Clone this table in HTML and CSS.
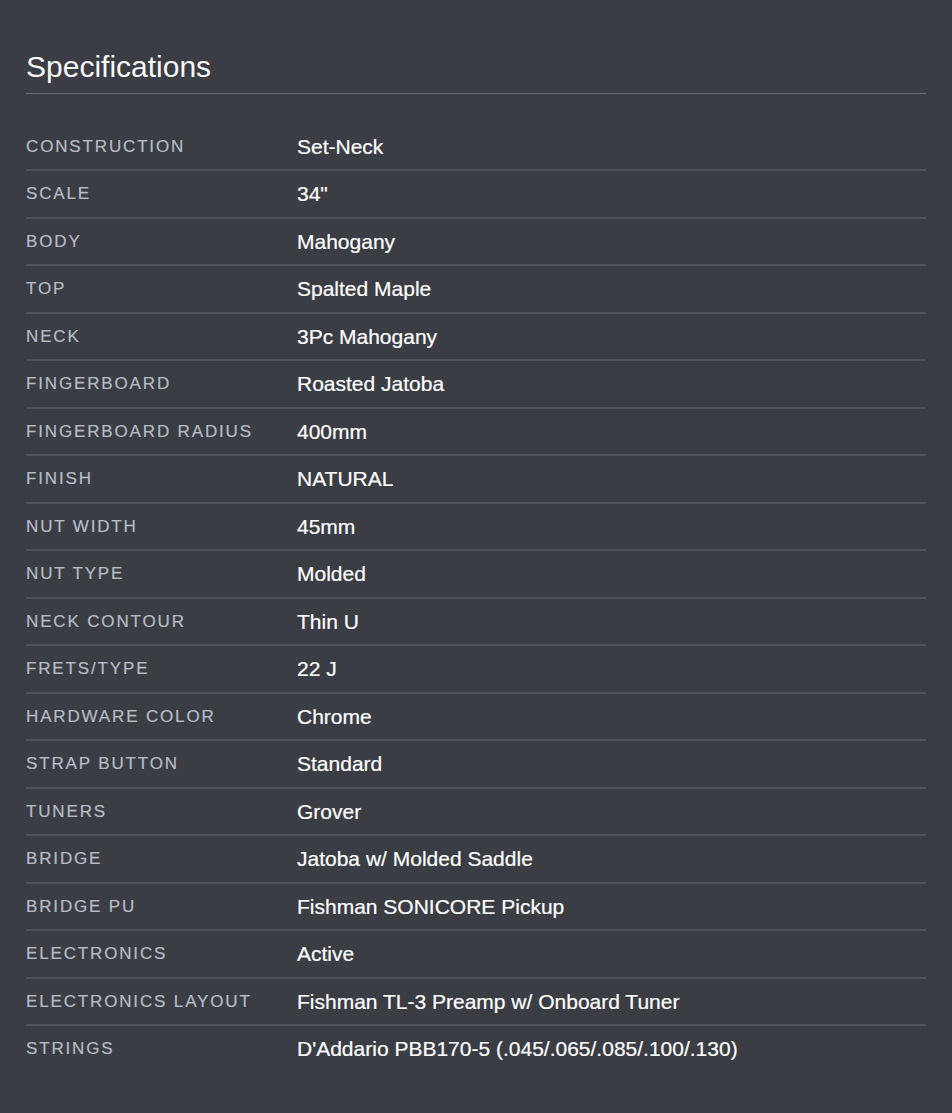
FILE: index.html
```html
<!DOCTYPE html>
<html lang="en">
<head>
<meta charset="utf-8">
<title>Specifications</title>
<link rel="stylesheet" href="styles.css">
</head>
<body>
<section class="specs">
  <h2 class="specs-title">Specifications</h2>
  <dl class="spec-list">
    <div class="spec-row"><dt>Construction</dt><dd>Set-Neck</dd></div>
    <div class="spec-row"><dt>Scale</dt><dd>34"</dd></div>
    <div class="spec-row"><dt>Body</dt><dd>Mahogany</dd></div>
    <div class="spec-row"><dt>Top</dt><dd>Spalted Maple</dd></div>
    <div class="spec-row"><dt>Neck</dt><dd>3Pc Mahogany</dd></div>
    <div class="spec-row"><dt>Fingerboard</dt><dd>Roasted Jatoba</dd></div>
    <div class="spec-row"><dt>Fingerboard Radius</dt><dd>400mm</dd></div>
    <div class="spec-row"><dt>Finish</dt><dd>NATURAL</dd></div>
    <div class="spec-row"><dt>Nut Width</dt><dd>45mm</dd></div>
    <div class="spec-row"><dt>Nut Type</dt><dd>Molded</dd></div>
    <div class="spec-row"><dt>Neck Contour</dt><dd>Thin U</dd></div>
    <div class="spec-row"><dt>Frets/Type</dt><dd>22 J</dd></div>
    <div class="spec-row"><dt>Hardware Color</dt><dd>Chrome</dd></div>
    <div class="spec-row"><dt>Strap Button</dt><dd>Standard</dd></div>
    <div class="spec-row"><dt>Tuners</dt><dd>Grover</dd></div>
    <div class="spec-row"><dt>Bridge</dt><dd>Jatoba w/ Molded Saddle</dd></div>
    <div class="spec-row"><dt>Bridge PU</dt><dd>Fishman SONICORE Pickup</dd></div>
    <div class="spec-row"><dt>Electronics</dt><dd>Active</dd></div>
    <div class="spec-row"><dt>Electronics Layout</dt><dd>Fishman TL-3 Preamp w/ Onboard Tuner</dd></div>
    <div class="spec-row"><dt>Strings</dt><dd>D'Addario PBB170-5 (.045/.065/.085/.100/.130)</dd></div>
  </dl>
</section>
</body>
</html>
```
FILE: styles.css
```css
html, body {
  margin: 0;
  padding: 0;
  background: #3b3d44;
}

body {
  font-family: "Liberation Sans", Arial, sans-serif;
  color: #ffffff;
}

.specs {
  padding: 50px 26px 40px 26px;
}

.specs-title {
  margin: 0;
  font-size: 30px;
  line-height: 34px;
  font-weight: 400;
  color: #f7f7f7;
  padding-bottom: 9px;
  border-bottom: 1px solid #6b6e76;
}

.spec-list {
  margin: 29.5px 0 0 0;
  padding: 0;
}

.spec-row {
  display: grid;
  grid-template-columns: 271px 1fr;
  align-items: center;
  padding: 11px 0 10.5px 0;
  border-bottom: 2px solid #4f5259;
}

.spec-row:last-child {
  border-bottom: none;
}

.spec-row dt {
  margin: 0;
  font-size: 17px;
  line-height: 24px;
  letter-spacing: 1.85px;
  text-transform: uppercase;
  color: #b6bcc5;
  -webkit-text-stroke: 0.2px #b6bcc5;
}

.spec-row dd {
  margin: 0;
  font-size: 21px;
  line-height: 24px;
  color: #ffffff;
  -webkit-text-stroke: 0.2px #ffffff;
}
```
